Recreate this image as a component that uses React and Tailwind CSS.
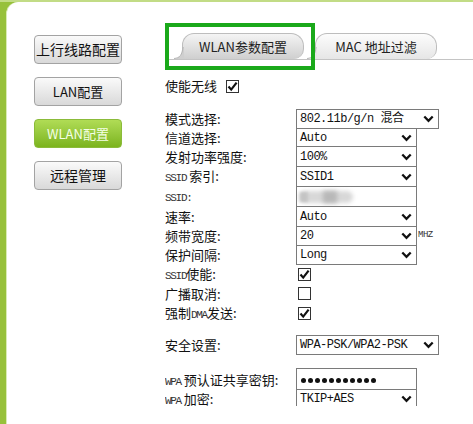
import React from 'react';

const cjk = { fontFamily: '"Noto Sans CJK SC", "Liberation Sans", sans-serif' };
const mono = { fontFamily: '"Liberation Mono", "Noto Sans CJK SC", monospace' };

const Chevron = () => (
    <svg width="11" height="8" viewBox="0 0 11 8" className="shrink-0">
        <path d="M1.3 1.5 L5.5 5.8 L9.7 1.5" fill="none" stroke="#111" strokeWidth="2.3" />
    </svg>
);

const Check = ({ on }) => (
    <div className="w-[13px] h-[13px] border border-[#333] bg-white flex items-center justify-center">
        {on && (
            <svg width="11" height="11" viewBox="0 0 11 11">
                <path d="M1.5 5.5 L4.2 8.6 L9.6 1.6" fill="none" stroke="#111" strokeWidth="2.2" />
            </svg>
        )}
    </div>
);

const Select = ({ value, wide, h = 20 }) => (
    <div
        className={`flex items-center justify-between bg-white border border-[#7a7a7a] pl-[3px] pr-[4px] text-[12px] tracking-[-0.5px] text-[#111] ${wide ? 'w-[143px]' : 'w-[121px]'}`}
        style={{ ...mono, height: h }}
    >
        <span>{value}</span>
        <Chevron />
    </div>
);

const Lbl = ({ children }) => (
    <div className="w-[131px] shrink-0 text-[13px] text-[#111] leading-none whitespace-nowrap" style={cjk}>{children}</div>
);

const Sm = ({ children }) => (
    <span className="text-[11px] tracking-[-1.3px] text-[#333]" style={mono}>{children}</span>
);

const NavButton = ({ label, active, small }) => (
    <div
        className={`w-[88px] h-[29px] rounded-[4px] border flex items-center justify-center whitespace-nowrap ${active ? 'bg-gradient-to-b from-[#b0dc55] to-[#7cb41c] border-[#8bbb3a] text-[#f4ffe6]' : 'bg-gradient-to-b from-[#fafafa] to-[#d9d9d9] border-[#a3a3a3] text-[#111]'} ${small ? 'text-[13px]' : 'text-[14px]'}`}
        style={cjk}
    >
        {label}
    </div>
);

const Tab = ({ label, active }) => (
    <div className="relative w-[122px] h-[26px]">
        <svg width="10" height="12" viewBox="0 0 10 12" className="absolute -left-[8px] bottom-0">
            <path d="M0 12 C6 11 8 8 9 0 L10 0 L10 12 Z" fill={active ? '#cfcfcf' : '#e6e6e6'} />
            <path d="M0 11.5 C6 11 8 8 9 0" fill="none" stroke="#b5b5b5" strokeWidth="1" />
        </svg>
        <div
            className={`h-full rounded-tl-[12px] rounded-tr-[13px] rounded-br-[10px] border border-b-0 border-[#bdbdbd] flex items-center justify-center text-[13px] text-[#222] ${active ? 'bg-gradient-to-b from-[#f4f4f4] to-[#cfcfcf]' : 'bg-gradient-to-b from-[#fcfcfc] to-[#e6e6e6]'}`}
            style={cjk}
        >
            {label}
        </div>
    </div>
);

const rows = [
    { h: 19, label: '模式选择:', value: '802.11b/g/n 混合', wide: true },
    { h: 18, label: '信道选择:', value: 'Auto' },
    { h: 20, label: '发射功率强度:', value: '100%' },
    { h: 20, label: <><Sm>SSID</Sm> 索引:</>, value: 'SSID1' },
    { h: 20, label: <Sm>SSID:</Sm>, ssid: true },
    { h: 20, label: '速率:', value: 'Auto' },
    { h: 19, label: '频带宽度:', value: '20', mhz: true },
    { h: 19, label: '保护间隔:', value: 'Long' },
];

const checks = [
    { h: 20, label: <><Sm>SSID</Sm>使能:</>, on: true },
    { h: 19, label: '广播取消:', on: false },
    { h: 20, label: <>强制<Sm>DMA</Sm>发送:</>, on: true },
];

export default function App() {
    return (
        <div className="relative w-[473px] h-[424px] overflow-hidden bg-[#97c13b] pt-[2px] pl-[6px]">
            <div className="absolute top-0 left-0 right-0 h-[2px] bg-[#c2dc86]" />
            <div className="relative h-full bg-white rounded-tl-[12px] border-l border-[#d9ecb4] flex">
                {/* left nav */}
                <div className="w-[158px] shrink-0 pt-[33px] pl-[27px] flex flex-col gap-[13px]">
                    <NavButton label="上行线路配置" />
                    <NavButton label="LAN配置" small />
                    <NavButton label="WLAN配置" active small />
                    <NavButton label="远程管理" />
                </div>

                {/* content */}
                <div className="flex-1 h-[404px] overflow-hidden">
                    <div className="mt-[31px] h-[27px] flex items-end gap-[11px] pl-[17px] border-b border-[#c4c4c4]">
                        <Tab label="WLAN参数配置" active />
                        <Tab label="MAC 地址过滤" />
                    </div>

                    <div className="mt-[17px] h-[18px] flex items-center">
                        <div className="w-[61px] text-[13px] text-[#111]" style={cjk}>使能无线</div>
                        <Check on />
                    </div>

                    <div className="mt-[14px]">
                        {rows.map((r, i) => (
                            <div key={i} className="flex items-start" style={{ height: r.h }}>
                                <div className="self-center"><Lbl>{r.label}</Lbl></div>
                                {r.ssid ? (
                                    <div className="relative w-[121px] h-[21px] bg-white border border-[#7a7a7a] overflow-hidden">
                                        <div className="absolute left-[2px] top-[4px] w-[54px] h-[12px] rounded-full bg-[#d8d8d8] blur-[2px]" />
                                        <div className="absolute left-[26px] top-[4px] w-[14px] h-[12px] bg-[#b8b8b8] blur-[2px]" />
                                        <div className="absolute left-[3px] top-[5px] w-[8px] h-[10px] bg-[#c4c4c4] blur-[1.5px]" />
                                    </div>
                                ) : (
                                    <Select value={r.value} wide={r.wide} h={r.h + 1} />
                                )}
                                {r.mhz && (
                                    <span className="self-center ml-[1px] text-[9px] text-[#333] tracking-[-0.5px]" style={mono}>MHZ</span>
                                )}
                            </div>
                        ))}
                        {checks.map((c, i) => (
                            <div key={i} className="flex items-center" style={{ height: c.h }}>
                                <Lbl>{c.label}</Lbl>
                                <div className="ml-[2px]"><Check on={c.on} /></div>
                            </div>
                        ))}
                    </div>

                    <div className="mt-[12px] h-[19px] flex items-start">
                        <div className="self-center"><Lbl>安全设置:</Lbl></div>
                        <Select value="WPA-PSK/WPA2-PSK" wide h={20} />
                    </div>

                    <div className="mt-[14px] h-[21px] flex items-start">
                        <div className="self-center pt-[4px]"><Lbl><Sm>WPA</Sm> 预认证共享密钥:</Lbl></div>
                        <div className="w-[121px] h-[22px] border border-[#7a7a7a] bg-white flex items-center gap-[2px] pl-[4px] pt-[2px]">
                            {Array.from({ length: 11 }).map((_, i) => (
                                <span key={i} className="w-[5px] h-[5px] rounded-full bg-[#111]" />
                            ))}
                        </div>
                    </div>
                    <div className="h-[20px] flex items-start">
                        <div className="self-center"><Lbl><Sm>WPA</Sm> 加密:</Lbl></div>
                        <Select value="TKIP+AES" h={20} />
                    </div>
                </div>
            </div>

            {/* highlight box drawn over the tab */}
            <div className="absolute left-[165px] top-[23px] w-[150px] h-[47px] border-[4px] border-[#1aa91a]" />
        </div>
    );
}
